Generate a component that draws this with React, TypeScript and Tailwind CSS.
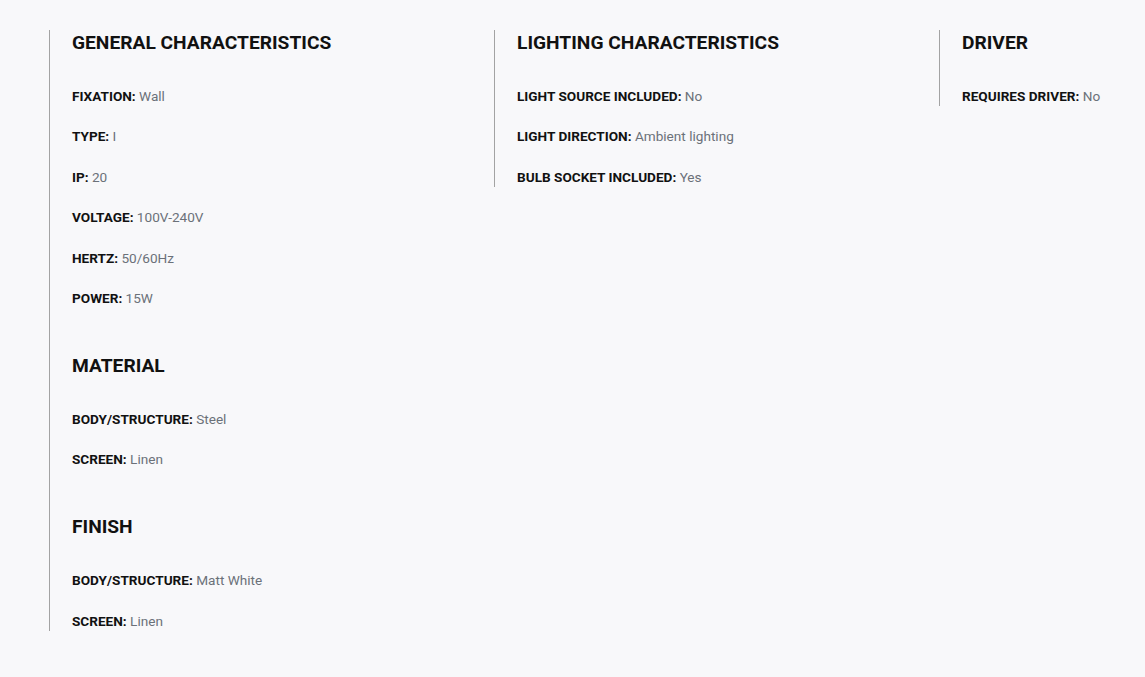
import React from "react";

type Row = [string, string];
type Section = { title: string; rows: Row[] };

const columns: Section[][] = [
  [
    {
      title: "GENERAL CHARACTERISTICS",
      rows: [
        ["FIXATION:", "Wall"],
        ["TYPE:", "I"],
        ["IP:", "20"],
        ["VOLTAGE:", "100V-240V"],
        ["HERTZ:", "50/60Hz"],
        ["POWER:", "15W"],
      ],
    },
    {
      title: "MATERIAL",
      rows: [
        ["BODY/STRUCTURE:", "Steel"],
        ["SCREEN:", "Linen"],
      ],
    },
    {
      title: "FINISH",
      rows: [
        ["BODY/STRUCTURE:", "Matt White"],
        ["SCREEN:", "Linen"],
      ],
    },
  ],
  [
    {
      title: "LIGHTING CHARACTERISTICS",
      rows: [
        ["LIGHT SOURCE INCLUDED:", "No"],
        ["LIGHT DIRECTION:", "Ambient lighting"],
        ["BULB SOCKET INCLUDED:", "Yes"],
      ],
    },
  ],
  [
    {
      title: "DRIVER",
      rows: [["REQUIRES DRIVER:", "No"]],
    },
  ],
];

function SectionBlock({ s }: { s: Section }) {
  return (
    <div>
      <h2 className="text-[19.2px] leading-[26px] font-bold text-[#111111] mb-[30px]">{s.title}</h2>
      <div className="flex flex-col gap-[20.4px]">
        {s.rows.map(([k, v], i) => (
          <div key={i} className="text-[13.6px] leading-[20px]">
            <span className="font-bold text-[#111111]">{k}</span>{" "}
            <span className="text-[#6b7179]">{v}</span>
          </div>
        ))}
      </div>
    </div>
  );
}

export default function App() {
  return (
    <div
      className="min-h-[677px] w-[1145px] overflow-hidden bg-[#f8f8fa] pt-[30px] pl-[49px]"
      style={{ fontFamily: "Roboto, 'Noto Sans', sans-serif" }}
    >
      <div className="flex items-start">
        {columns.map((col, ci) => (
          <div key={ci} className={ci < 2 ? "w-[445px] shrink-0" : "flex-1"}>
            <div className="border-l border-[#a3a3a3] pl-[22px] flex flex-col gap-[45px] w-fit pr-2">
              {col.map((s, si) => (
                <SectionBlock key={si} s={s} />
              ))}
            </div>
          </div>
        ))}
      </div>
    </div>
  );
}
